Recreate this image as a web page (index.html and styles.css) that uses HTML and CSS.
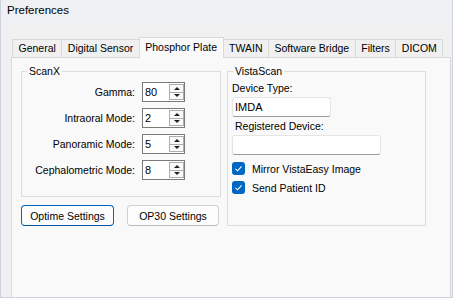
FILE: index.html
```html
<!DOCTYPE html>
<html lang="en">
<head>
  <meta charset="UTF-8">
  <meta name="viewport" content="width=device-width, initial-scale=1.0">
  <title>Preferences</title>
  <link rel="stylesheet" href="styles.css">
</head>
<body>

<div class="window">
  <div class="titlebar">Preferences</div>

  <div class="content">
    <div class="tabs">
      <div class="tab">General</div>
      <div class="tab">Digital Sensor</div>
      <div class="tab active">Phosphor Plate</div>
      <div class="tab">TWAIN</div>
      <div class="tab">Software Bridge</div>
      <div class="tab">Filters</div>
      <div class="tab">DICOM</div>
    </div>

    <div class="panel">
      <div class="left-column">
        <fieldset class="group scanx">
          <legend>ScanX</legend>

          <div class="field-row">
            <label for="gamma">Gamma:</label>
            <div class="spin" id="gamma">
              <span class="spin-value">80</span>
              <div class="spin-buttons">
                <span class="spin-btn up"></span>
                <span class="spin-btn down"></span>
              </div>
            </div>
          </div>

          <div class="field-row">
            <label for="intraoral">Intraoral Mode:</label>
            <div class="spin" id="intraoral">
              <span class="spin-value">2</span>
              <div class="spin-buttons">
                <span class="spin-btn up"></span>
                <span class="spin-btn down"></span>
              </div>
            </div>
          </div>

          <div class="field-row">
            <label for="panoramic">Panoramic Mode:</label>
            <div class="spin" id="panoramic">
              <span class="spin-value">5</span>
              <div class="spin-buttons">
                <span class="spin-btn up"></span>
                <span class="spin-btn down"></span>
              </div>
            </div>
          </div>

          <div class="field-row">
            <label for="cephalometric">Cephalometric Mode:</label>
            <div class="spin" id="cephalometric">
              <span class="spin-value">8</span>
              <div class="spin-buttons">
                <span class="spin-btn up"></span>
                <span class="spin-btn down"></span>
              </div>
            </div>
          </div>
        </fieldset>

        <div class="button-row">
          <button class="btn btn-default optime">Optime Settings</button>
          <button class="btn op30">OP30 Settings</button>
        </div>
      </div>

      <fieldset class="group vistascan">
        <legend>VistaScan</legend>

        <div class="field-label">Device Type:</div>
        <div class="textbox device-type">IMDA</div>

        <div class="field-label indent">Registered Device:</div>
        <div class="textbox registered"></div>

        <div class="checks">
          <div class="check-row">
            <span class="checkbox">
              <svg width="13" height="13" viewBox="0 0 13 13"><path d="M3.5 6.8 L5.6 8.8 L9.6 4.4" fill="none" stroke="#fff" stroke-width="1.1"/></svg>
            </span>
            <span>Mirror VistaEasy Image</span>
          </div>
          <div class="check-row">
            <span class="checkbox">
              <svg width="13" height="13" viewBox="0 0 13 13"><path d="M3.5 6.8 L5.6 8.8 L9.6 4.4" fill="none" stroke="#fff" stroke-width="1.1"/></svg>
            </span>
            <span>Send Patient ID</span>
          </div>
        </div>
      </fieldset>
    </div>
  </div>
</div>

</body>
</html>
```
FILE: styles.css
```css
* {
  box-sizing: border-box;
}
body {
  margin: 0;
  font-family: "Liberation Sans", Arial, sans-serif;
  font-size: 10.5px;
  color: #000;
}
.window {
  width: 453px;
  height: 298px;
  display: flex;
  flex-direction: column;
  background: #f0f0f0;
  border: 1px solid #cdd3dd;
  border-top: none;
}
.titlebar {
  height: 25px;
  padding: 3px 0 0 6px;
  font-size: 11.5px;
  line-height: 15px;
  background: #eef0f4;
}
.content {
  flex: 1;
  display: flex;
  flex-direction: column;
  padding: 14px 1px 0 10px;
}

/* tab strip */
.tabs {
  display: flex;
  height: 18px;
  padding-left: 1px;
}
.tab {
  height: 18px;
  padding: 0 5.5px;
  line-height: 17px;
  border: 1px solid #d9d9d9;
  border-bottom: none;
  margin-right: -1px;
  background: #f0f0f0;
  white-space: nowrap;
}
.tab.active {
  position: relative;
  z-index: 1;
  height: 21px;
  margin-top: -2px;
  line-height: 19px;
  background: #f9f9f9;
}
.panel {
  flex: 1;
  display: flex;
  gap: 6px;
  padding: 7px 0 0 9px;
  background: #f9f9f9;
  border: 1px solid #d9d9d9;
  border-bottom: none;
}

/* group boxes */
.group {
  margin: 0;
  border: 1px solid #dcdcdc;
  min-width: 0;
}
.group legend {
  height: 13px;
  line-height: 13px;
  padding: 0 2px;
}
.left-column {
  width: 200px;
  display: flex;
  flex-direction: column;
}
.scanx {
  padding: 4px 35px 16px 0;
  display: flex;
  flex-direction: column;
  gap: 6px;
}
.scanx legend {
  margin-left: 5px;
}
.field-row {
  display: flex;
  justify-content: flex-end;
  align-items: center;
  gap: 7px;
  height: 20px;
}

/* spin box */
.spin {
  width: 43px;
  height: 20px;
  display: flex;
  background: #fff;
  border: 1px solid #7a7a7a;
}
.spin-value {
  flex: 1;
  padding-left: 2px;
  line-height: 18px;
  font-size: 11px;
}
.spin-buttons {
  width: 15px;
  display: flex;
  flex-direction: column;
  padding: 1px 0 1px 0;
}
.spin-btn {
  flex: 1;
  display: flex;
  align-items: center;
  justify-content: center;
  background: #fafafa;
  border: 1px solid #adadad;
}
.spin-btn.down {
  border-top: none;
}
.spin-btn::after {
  content: "";
  border-left: 3px solid transparent;
  border-right: 3px solid transparent;
}
.spin-btn.up::after {
  border-bottom: 3px solid #202020;
}
.spin-btn.down::after {
  border-top: 3px solid #202020;
}

/* buttons */
.button-row {
  display: flex;
  gap: 13px;
  margin-top: 8px;
}
.btn {
  height: 21px;
  padding: 0;
  font-family: inherit;
  font-size: 10.5px;
  color: #000;
  background: #fdfdfd;
  border: 1px solid #d0d0d0;
  border-bottom-color: #b9b9b9;
  border-radius: 4px;
}
.btn-default {
  border-color: #0067c0;
  border-bottom-color: #00529a;
}
.optime {
  width: 93px;
}
.op30 {
  width: 92px;
}

/* VistaScan */
.vistascan {
  width: 199px;
  align-self: flex-start;
  padding: 0 4px 31px 4px;
}
.vistascan legend {
  margin-left: 1px;
}
.field-label {
  margin-top: 3px;
  line-height: 14px;
}
.field-label.indent {
  margin-top: 2px;
  padding-left: 3px;
}
.textbox {
  height: 20px;
  margin-top: 2px;
  padding-left: 2px;
  line-height: 18px;
  font-size: 11px;
  background: #fff;
  border: 1px solid #e5e5e5;
  border-bottom-color: #9c9c9c;
  border-radius: 3px;
}
.device-type {
  width: 99px;
}
.registered {
  width: 149px;
}
.checks {
  display: flex;
  flex-direction: column;
  gap: 6px;
  margin-top: 7px;
}
.check-row {
  display: flex;
  align-items: center;
  gap: 7px;
  height: 13px;
}
.checkbox {
  width: 13px;
  height: 13px;
  display: flex;
  border-radius: 3px;
  background: #0067c0;
}
```
